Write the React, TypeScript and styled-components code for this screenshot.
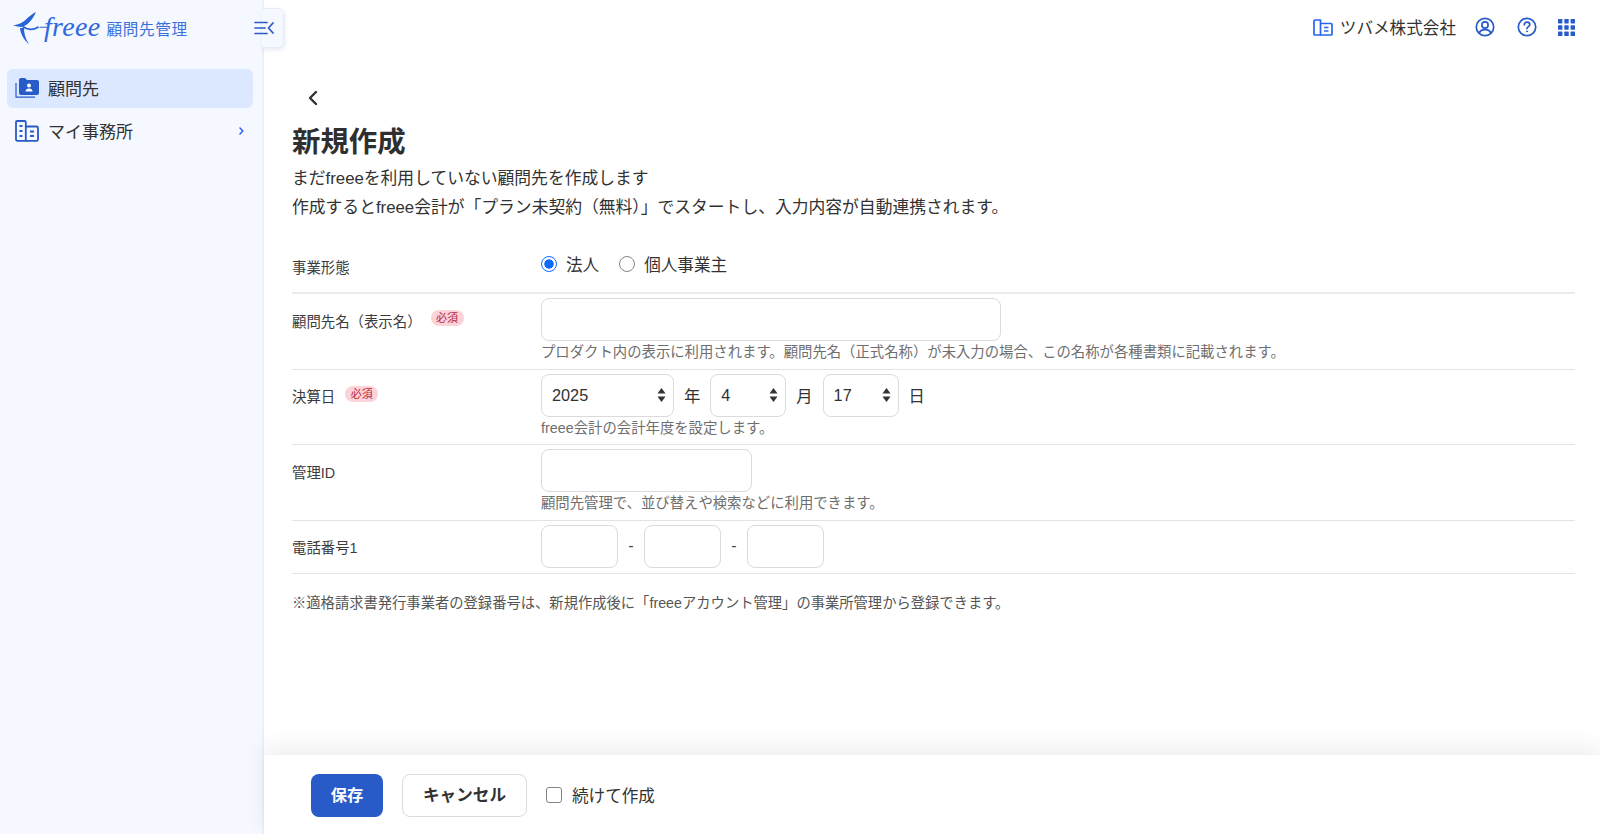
import React from "react";
import styled, { createGlobalStyle } from "styled-components";

const Global = createGlobalStyle`
  html, body { margin: 0; padding: 0; height: 100%; background: #fff; }
  body { font-family: "Liberation Sans", "Noto Sans CJK JP", sans-serif; color: #323232; overflow: hidden; }
  * { box-sizing: border-box; }
`;

const Page = styled.div`display: flex; width: 1600px; height: 834px; overflow: hidden;`;

const Sidebar = styled.aside`
  position: relative; flex: 0 0 264px; background: #f5f8ff; border-right: 2px solid #e9effb;
  padding: 0 9px 0 7px; display: flex; flex-direction: column;
`;
const Brand = styled.div`display: flex; align-items: center; height: 57px; padding: 0 0 2px 5px; color: #2864f0;`;
const BrandWord = styled.span`
  font-family: "Liberation Serif", serif; font-style: italic; font-size: 28px; letter-spacing: 0.3px;
  margin-left: -4px; color: #2f68dc; line-height: 1; position: relative; top: -1px;
`;
const BrandName = styled.span`font-size: 15.6px; letter-spacing: 0.7px; margin-left: 6px; color: #3a70dc;`;
const Toggle = styled.button`
  position: absolute; left: 262px; top: 8px; width: 22px; height: 40px; padding: 0; z-index: 2;
  background: #f5f8ff; border: 1px solid #e3ebfa; border-left: none; border-radius: 0 6px 6px 0;
  box-shadow: 1px 2px 4px rgba(40, 80, 160, 0.12); display: flex; align-items: center; justify-content: flex-start;
`;
const ToggleGlyph = styled.svg`margin-left: -8px; flex: none;`;
const Nav = styled.nav`display: flex; flex-direction: column; gap: 4.5px; margin-top: 12px;`;
const NavItem = styled.div<{ $active?: boolean }>`
  display: flex; align-items: center; height: 38.5px; padding: 0 8px 1px; border-radius: 6px;
  background: ${(p) => (p.$active ? "#dce8ff" : "transparent")}; font-size: 17px; color: #323232; gap: 9px;
`;
const NavLabel = styled.span`flex: 1;`;

const Main = styled.main`flex: 1; display: flex; flex-direction: column; min-width: 0;`;
const Topbar = styled.header`
  display: flex; align-items: center; justify-content: flex-end; height: 54px; padding-right: 25px; font-size: 16.6px;
`;
const Company = styled.div`display: flex; align-items: center; gap: 7px; margin-right: 19px;`;
const TopIcons = styled.div`display: flex; align-items: center; gap: 21.5px;`;

const Content = styled.div`flex: 1; padding: 28px 25px 0 28px; min-height: 0;`;
const Back = styled.div`display: flex; padding-left: 15px; height: 32px; align-items: center;`;
const Title = styled.h1`margin: 7px 0 0; font-size: 28.4px; font-weight: 700; line-height: 42px; color: #2f2f2f;`;
const Lead = styled.p`margin: 1px 0 0; font-size: 16.8px; line-height: 29px; color: #323232;`;

const Form = styled.div`margin-top: 20px;`;
const Row = styled.div`
  display: grid; grid-template-columns: 249px 1fr; padding: 4px 0 6.67px;
  border-bottom: 1px solid #e4e2e2;
`;
const LastRow = styled(Row)`padding-bottom: 5px;`;
const RadioRow = styled(Row)`height: 52px; padding: 0 0 4px; align-items: center; border-bottom-width: 2px; border-color: #ebebeb;`;
const Label = styled.div`display: flex; align-items: flex-start; font-size: 14.4px; line-height: 20px; padding-top: 13.5px; color: #3c3c3c;`;
const RadioLabelCell = styled(Label)`padding-top: 6px;`;
const Badge = styled.span<{ $gap: number }>`
  margin: -1.5px 0 0 ${(p) => p.$gap}px; width: 33px; height: 16px; border-radius: 8px; background: #fbd3d8; color: #b4283c;
  font-size: 11px; line-height: 16px; text-align: center;
`;
const Controls = styled.div`display: flex; align-items: center; gap: 10px;`;
const Radios = styled.div`display: flex; align-items: center; font-size: 16.6px; padding-bottom: 2px;`;
const RadioWrap = styled.label`display: flex; align-items: center; gap: 9px; margin-right: 20px;`;
const Radio = styled.input`
  appearance: none; margin: 0; width: 16px; height: 16px; border-radius: 50%; background: #fff;
  border: 1.5px solid #858585;
  &:checked { border-color: #0a6cff; background: radial-gradient(circle, #0a6cff 0 4.4px, #fff 4.9px); }
`;
const TextInput = styled.input<{ $w: number }>`
  display: block; width: ${(p) => p.$w}px; height: 43px; border: 1px solid #dcdada; border-radius: 8px; background: #fff; outline: none;
`;
const Hint = styled.div`margin-top: 1px; font-size: 14.36px; line-height: 20px; color: #6e6e6e; height: 20px; white-space: nowrap;`;
const SelectWrap = styled.div<{ $w: number }>`position: relative; width: ${(p) => p.$w}px; height: 43px;`;
const Select = styled.select`
  appearance: none; width: 100%; height: 100%; border: 1px solid #dcdada; border-radius: 8px; background: #fff;
  padding-left: 10px; font: inherit; font-size: 16.3px; color: #323232; outline: none;
`;
const Updown = styled.svg`position: absolute; right: 8px; top: 13px; pointer-events: none;`;
const Unit = styled.span`font-size: 16.3px;`;
const Dash = styled.span`font-size: 16px; width: 16px; text-align: center; color: #444;`;
const PhoneRow = styled(Controls)`gap: 5px;`;
const Note = styled.p`margin: 19px 0 0; font-size: 14.3px; line-height: 20px; color: #555;`;

const Footer = styled.footer`
  flex: 0 0 79px; display: flex; align-items: center; padding: 1px 0 0 47px; background: #fff; gap: 19px;
  box-shadow: 0 -8px 22px rgba(0, 0, 0, 0.07); position: relative;
`;
const Primary = styled.button`
  width: 72px; height: 43px; padding: 0 0 2px; border: none; border-radius: 8px; background: #285ac8; color: #fff;
  font: inherit; font-size: 16.3px; font-weight: 700;
`;
const Secondary = styled.button`
  width: 125px; height: 43px; padding: 0 0 2px; border: 1px solid #dcdada; border-radius: 8px; background: #fff; color: #323232;
  font: inherit; font-size: 16.6px; font-weight: 700;
`;
const CheckWrap = styled.label`display: flex; align-items: center; gap: 10px; font-size: 16.6px; color: #323232;`;
const Check = styled.input`
  appearance: none; margin: 0; width: 16px; height: 16px; border: 1.5px solid #858585; border-radius: 3px; background: #fff;
`;

const BLUE = "#2864f0";
const DEEP = "#285ac8";

const Bird = () => (
  <svg width="36" height="36" viewBox="0 0 36 36" fill="none">
    <path d="M1 15.5 C7 14.5 11 12.5 14 9.5 C17 6.5 20 4 24 2 C22 7 19 11 15 14.5 C13 15.5 11 16.5 9 17 C7 16.8 4 16.2 1 15.5 Z" fill="#2864d8" />
    <path d="M8 18 C9.5 18 11 17.6 12 17.4 C11.8 23 13.5 29 17 34 C12 30 8.5 24 8 18 Z" fill="#2864d8" />
    <path d="M11 16.5 C15 20 21 20.5 26 17.2" stroke="#2864d8" strokeWidth="1.7" strokeLinecap="round" />
    <path d="M28 17.2H35" stroke="#2864d8" strokeWidth="1.1" strokeLinecap="round" />
  </svg>
);

const ToggleIcon = () => (
  <ToggleGlyph width="20" height="14" viewBox="0 0 20 14" fill="none" stroke={DEEP} strokeWidth="1.7" strokeLinecap="round" strokeLinejoin="round">
    <path d="M1 1.5H13M1 7H11M1 12.5H13M19 2L14.5 7L19 12" />
  </ToggleGlyph>
);

const ClientsIcon = () => (
  <svg width="24" height="22" viewBox="0 0 24 22">
    <path d="M1 6V20.2H20" fill="none" stroke={DEEP} strokeWidth="1.2" strokeLinejoin="round" />
    <path d="M4 3C4 1.9 4.9 1 6 1H10L12 3H22C23 3 24 3.9 24 5V16C24 17.1 23.1 18 22 18H6C4.9 18 4 17.1 4 16Z" fill={DEEP} />
    <circle cx="14" cy="8.5" r="2" fill="#fff" />
    <path d="M10.5 14.5C10.5 12.5 12 11.5 14 11.5S17.5 12.5 17.5 14.5Z" fill="#fff" />
  </svg>
);

const OfficeIcon = () => (
  <svg width="24" height="22" viewBox="0 0 24 22" fill="none">
    <path d="M1 2.2C1 1.5 1.5 1 2.2 1H9.5C10.2 1 10.8 1.5 10.8 2.2V20.8H2.2C1.5 20.8 1 20.3 1 19.6Z" stroke={DEEP} strokeWidth="1.8" />
    <path d="M10.8 6.5H21.5C22.3 6.5 23 7.1 23 7.9V19.4C23 20.2 22.3 20.8 21.5 20.8H10.8" stroke={DEEP} strokeWidth="1.8" />
    <path d="M4.5 6H7.5M4.5 11H7.5M4.5 16H7.5M15 11.5H19M15 16H19" stroke={DEEP} strokeWidth="2.2" />
  </svg>
);

const CompanyIcon = () => (
  <svg width="20" height="17" viewBox="0 0 20 17" fill="none" stroke={BLUE} strokeWidth="1.7" strokeLinejoin="round">
    <path d="M1 2C1 1.4 1.4 1 2 1H7.5V16H2C1.4 16 1 15.6 1 15Z" />
    <path d="M7.5 4.5H18C18.6 4.5 19 4.9 19 5.5V15C19 15.6 18.6 16 18 16H7.5" />
    <path d="M11 8.5H15.5M11 12H15.5" strokeWidth="1.5" />
  </svg>
);

const UserIcon = () => (
  <svg width="20" height="20" viewBox="0 0 20 20" fill="none" stroke={DEEP} strokeWidth="1.7">
    <circle cx="10" cy="10" r="8.7" />
    <circle cx="10" cy="8" r="3.1" />
    <path d="M4.2 16.2C5 13.6 7.2 12.6 10 12.6S15 13.6 15.8 16.2" />
  </svg>
);

const HelpIcon = () => (
  <svg width="20" height="20" viewBox="0 0 20 20" fill="none" stroke={DEEP} strokeWidth="1.7" strokeLinecap="round">
    <circle cx="10" cy="10" r="8.7" />
    <path d="M7.3 7.8C7.3 6.2 8.5 5.2 10 5.2S12.8 6.2 12.8 7.7C12.8 9.6 10 9.6 10 11.6" />
    <circle cx="10" cy="14.4" r="0.6" fill={DEEP} strokeWidth="0.8" />
  </svg>
);

const GridIcon = () => (
  <svg width="17" height="17" viewBox="0 0 17 17" fill={DEEP}>
    {[0, 6.3, 12.6].flatMap((y) =>
      [0, 6.3, 12.6].map((x) => <rect key={`${x}-${y}`} x={x} y={y} width="4.4" height="4.4" rx="0.6" />)
    )}
  </svg>
);

const SmallChevron = () => (
  <svg width="7" height="8" viewBox="0 0 7 8" fill="none" stroke={BLUE} strokeWidth="1.5" strokeLinecap="round" strokeLinejoin="round">
    <path d="M2 1L4.8 4L2 7" />
  </svg>
);

const BackChevron = () => (
  <svg width="12" height="16" viewBox="0 0 12 16" fill="none" stroke="#2f2f2f" strokeWidth="2.4" strokeLinecap="round" strokeLinejoin="round">
    <path d="M9 2L3 8L9 14" />
  </svg>
);

const Arrows = () => (
  <Updown width="9" height="16" viewBox="0 0 9 16" fill="#333">
    <path d="M4.5 1L8.5 6.5H0.5Z" />
    <path d="M4.5 15L8.5 9.5H0.5Z" />
  </Updown>
);

const DateSelect = ({ w, v }: { w: number; v: string }) => (
  <SelectWrap $w={w}>
    <Select defaultValue={v}>
      <option>{v}</option>
    </Select>
    <Arrows />
  </SelectWrap>
);

export default function App() {
  return (
    <Page>
      <Global />
      <Sidebar>
        <Brand>
          <Bird />
          <BrandWord>freee</BrandWord>
          <BrandName>顧問先管理</BrandName>
        </Brand>
        <Toggle aria-label="メニュー">
          <ToggleIcon />
        </Toggle>
        <Nav>
          <NavItem $active>
            <ClientsIcon />
            <NavLabel>顧問先</NavLabel>
          </NavItem>
          <NavItem>
            <OfficeIcon />
            <NavLabel>マイ事務所</NavLabel>
            <SmallChevron />
          </NavItem>
        </Nav>
      </Sidebar>
      <Main>
        <Topbar>
          <Company>
            <CompanyIcon />
            ツバメ株式会社
          </Company>
          <TopIcons>
            <UserIcon />
            <HelpIcon />
            <GridIcon />
          </TopIcons>
        </Topbar>
        <Content>
          <Back>
            <BackChevron />
          </Back>
          <Title>新規作成</Title>
          <Lead>
            まだfreeeを利用していない顧問先を作成します
            <br />
            作成するとfreee会計が「プラン未契約（無料）」でスタートし、入力内容が自動連携されます。
          </Lead>
          <Form>
            <RadioRow>
              <RadioLabelCell>事業形態</RadioLabelCell>
              <Radios>
                <RadioWrap>
                  <Radio type="radio" name="kind" defaultChecked />
                  法人
                </RadioWrap>
                <RadioWrap>
                  <Radio type="radio" name="kind" />
                  個人事業主
                </RadioWrap>
              </Radios>
            </RadioRow>
            <Row>
              <Label>
                顧問先名（表示名）<Badge $gap={9}>必須</Badge>
              </Label>
              <div>
                <TextInput $w={460} />
                <Hint>プロダクト内の表示に利用されます。顧問先名（正式名称）が未入力の場合、この名称が各種書類に記載されます。</Hint>
              </div>
            </Row>
            <Row>
              <Label>
                決算日<Badge $gap={10}>必須</Badge>
              </Label>
              <div>
                <Controls>
                  <DateSelect w={133} v="2025" />
                  <Unit>年</Unit>
                  <DateSelect w={76} v="4" />
                  <Unit>月</Unit>
                  <DateSelect w={76} v="17" />
                  <Unit>日</Unit>
                </Controls>
                <Hint>freee会計の会計年度を設定します。</Hint>
              </div>
            </Row>
            <Row>
              <Label>管理ID</Label>
              <div>
                <TextInput $w={211} />
                <Hint>顧問先管理で、並び替えや検索などに利用できます。</Hint>
              </div>
            </Row>
            <LastRow>
              <Label>電話番号1</Label>
              <PhoneRow>
                <TextInput $w={77} />
                <Dash>-</Dash>
                <TextInput $w={77} />
                <Dash>-</Dash>
                <TextInput $w={77} />
              </PhoneRow>
            </LastRow>
          </Form>
          <Note>※適格請求書発行事業者の登録番号は、新規作成後に「freeeアカウント管理」の事業所管理から登録できます。</Note>
        </Content>
        <Footer>
          <Primary>保存</Primary>
          <Secondary>キャンセル</Secondary>
          <CheckWrap>
            <Check type="checkbox" />
            続けて作成
          </CheckWrap>
        </Footer>
      </Main>
    </Page>
  );
}
